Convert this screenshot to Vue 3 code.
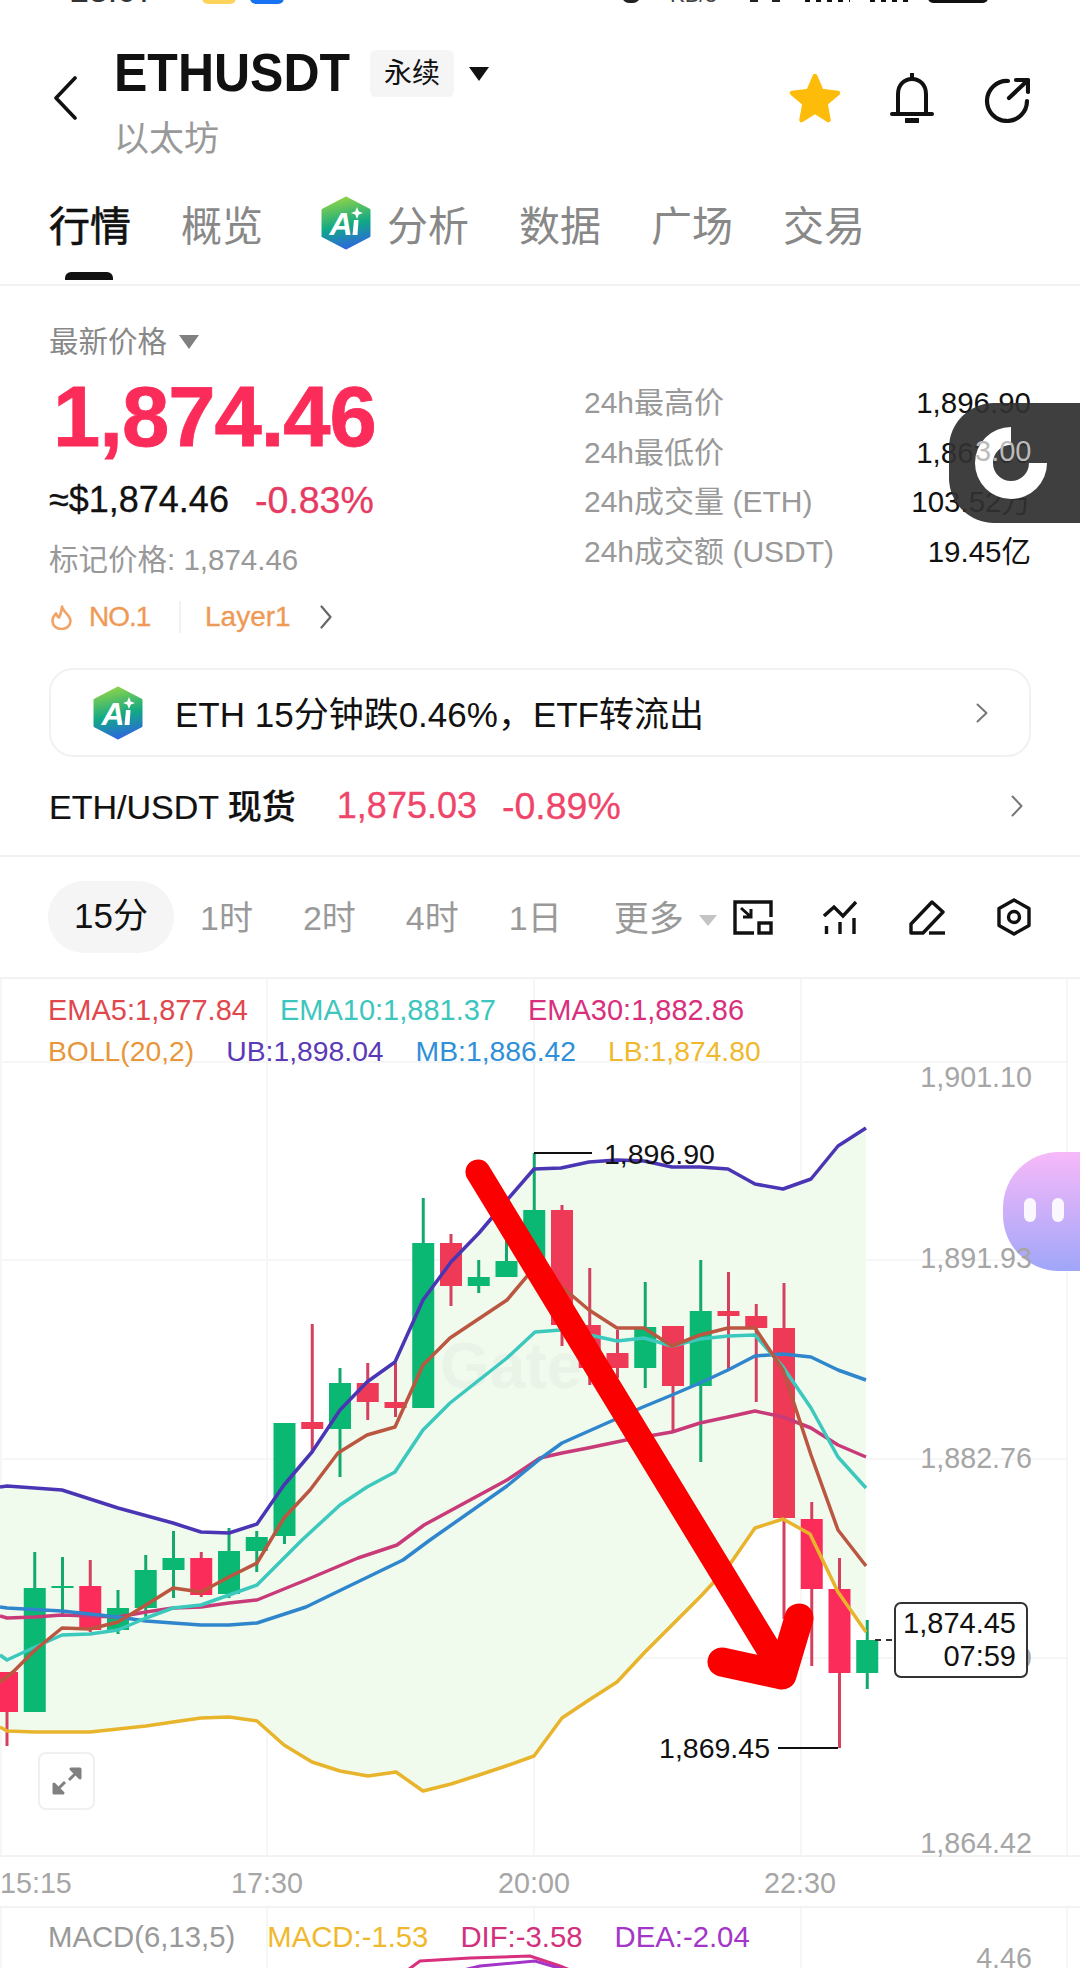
<template>
  <div class="page">
    <!-- status bar, only the bottom edge is left in the shot -->
    <div class="status">
      <span class="sb-time">23:07</span>
      <i class="sb-app yellow"></i>
      <i class="sb-app blue"></i>
      <span class="sb-right">
        <i class="sb-dot"></i>
        <span class="sb-speed">KB/s</span>
        <i class="sb-wifi"></i>
        <i class="sb-sig wide"></i>
        <i class="sb-sig"></i>
        <i class="sb-batt"></i>
      </span>
    </div>

    <header class="header">
      <svg class="back" viewBox="0 0 24 44" fill="none" stroke="#111" stroke-width="3.6" stroke-linecap="round" stroke-linejoin="round">
        <path d="M22 2 L3 22 L22 42" />
      </svg>
      <div class="title-block">
        <div class="title-row">
          <span class="title">ETHUSDT</span>
          <span class="chip">永续</span>
          <i class="tri black"></i>
        </div>
        <div class="subtitle">以太坊</div>
      </div>
      <div class="head-icons">
        <svg class="star" viewBox="0 0 52 50">
          <path d="M26 3 L32.5 18 L49 20 L36.5 30.5 L39.5 47 L26 38.5 L12.5 47 L15.5 30.5 L3 20 L19.5 18 Z" fill="#fdbb0a" stroke="#fdbb0a" stroke-width="4.5" stroke-linejoin="round" />
        </svg>
        <svg class="bell" viewBox="0 0 44 50" fill="none" stroke="#111" stroke-width="4" stroke-linecap="round">
          <path d="M22 1 V6" />
          <path d="M8 40 V21 C8 12 14 6 22 6 S36 12 36 21 V40" />
          <path d="M2 41 H42" />
          <rect x="15" y="45" width="14" height="5" fill="#111" stroke="none" />
        </svg>
        <svg class="refresh" viewBox="0 0 46 46" fill="none" stroke="#111" stroke-width="4.2" stroke-linecap="round" stroke-linejoin="round">
          <path d="M24 4 A20 20 0 1 0 43 24" />
          <path d="M32 3 H44 V15" />
          <path d="M43 4 L25 21" />
        </svg>
      </div>
    </header>

    <nav class="tabs">
      <div v-for="t in tabs" :key="t.name" class="tab" :class="{ active: t.active, ai: t.ai }">
        <svg v-if="t.ai" class="ai-logo" viewBox="0 0 50 54">
          <defs>
            <linearGradient id="aiGrad" x1="0.4" y1="0" x2="0.6" y2="1">
              <stop offset="0" stop-color="#8ad24a" />
              <stop offset="0.55" stop-color="#10a886" />
              <stop offset="1" stop-color="#2f66e0" />
            </linearGradient>
          </defs>
          <path d="M25 2 L48 14 V40 L25 52 L2 40 V14 Z" fill="url(#aiGrad)" stroke="url(#aiGrad)" stroke-width="3" stroke-linejoin="round" />
          <text x="20" y="39" class="ai-text" text-anchor="middle">A</text>
          <path d="M33 24 L37.5 24 L36.5 39 L31.5 39 Z" fill="#fff" />
          <path d="M36 11 L37.8 15.5 L42 17 L37.8 18.5 L36 23 L34.2 18.5 L30 17 L34.2 15.5 Z" fill="#fff" />
        </svg>
        {{ t.name }}
        <i v-if="t.active" class="tab-bar"></i>
      </div>
    </nav>

    <section class="info">
      <div class="info-left">
        <div class="latest">最新价格<i class="tri grey"></i></div>
        <div class="big-price">1,874.46</div>
        <div class="usd-row">
          <span class="usd">≈$1,874.46</span>
          <span class="pct">-0.83%</span>
        </div>
        <div class="mark">标记价格: 1,874.46</div>
        <div class="tags">
          <svg class="flame" viewBox="0 0 21 25" fill="none" stroke="#f2a468" stroke-width="2.6" stroke-linejoin="round">
            <path d="M11 1.5 C12 7 19.5 10 19.5 16 A9 8 0 0 1 1.5 16 C1.5 12.5 3 10.5 5 8.5 C6 11 7 12 8 12.5 C10 9 10.5 5 11 1.5 Z" />
          </svg>
          <span class="no1">NO.1</span>
          <i class="tag-div"></i>
          <span class="layer">Layer1</span>
          <svg class="tag-chev" viewBox="0 0 12 24" fill="none" stroke="#666" stroke-width="2.2" stroke-linecap="round" stroke-linejoin="round">
            <path d="M1.5 1.5 L10.5 12 L1.5 22.5" />
          </svg>
        </div>
      </div>
      <div class="stats">
        <div v-for="s in stats" :key="s.label" class="stat">
          <span class="stat-label">{{ s.label }}</span>
          <span class="stat-val">{{ s.value }}</span>
        </div>
      </div>
    </section>

    <div class="banner">
      <svg class="ai-logo" viewBox="0 0 50 54">
        <path d="M25 2 L48 14 V40 L25 52 L2 40 V14 Z" fill="url(#aiGrad)" stroke="url(#aiGrad)" stroke-width="3" stroke-linejoin="round" />
        <text x="20" y="39" class="ai-text" text-anchor="middle">A</text>
        <path d="M33 24 L37.5 24 L36.5 39 L31.5 39 Z" fill="#fff" />
        <path d="M36 11 L37.8 15.5 L42 17 L37.8 18.5 L36 23 L34.2 18.5 L30 17 L34.2 15.5 Z" fill="#fff" />
      </svg>
      <span class="banner-text">ETH 15分钟跌0.46%，ETF转流出</span>
      <svg class="chev" viewBox="0 0 12 20" fill="none" stroke="#777" stroke-width="2" stroke-linecap="round" stroke-linejoin="round">
        <path d="M1.5 1.5 L10.5 10 L1.5 18.5" />
      </svg>
    </div>

    <div class="spot">
      <span class="spot-name">ETH/USDT 现货</span>
      <span class="spot-price">1,875.03</span>
      <span class="spot-pct">-0.89%</span>
      <svg class="chev spot-chev" viewBox="0 0 12 22" fill="none" stroke="#777" stroke-width="2" stroke-linecap="round" stroke-linejoin="round">
        <path d="M1.5 1.5 L10.5 11 L1.5 20.5" />
      </svg>
    </div>

    <div class="frames">
      <span class="frame pill">15分</span>
      <span class="frame">1时</span>
      <span class="frame">2时</span>
      <span class="frame">4时</span>
      <span class="frame">1日</span>
      <span class="frame more">更多<i class="tri light"></i></span>
      <div class="tools">
        <svg class="tool" viewBox="0 0 40 35" fill="none" stroke="#111" stroke-width="3.4" stroke-linejoin="miter">
          <path d="M38 17 V2 H2 V33 H21" />
          <rect x="26" y="23" width="12" height="10" />
          <path d="M8 8 L18 17 M18 9 V17 H10" stroke-width="3" />
        </svg>
        <svg class="tool" viewBox="0 0 34 35" fill="none" stroke="#111" stroke-width="3.4" stroke-linejoin="miter">
          <path d="M1 16 L11 7 L20 16 L33 2" />
          <path d="M3.5 26 V34 M17 22 V34 M31 18 V34" />
        </svg>
        <svg class="tool" viewBox="0 0 37 35" fill="none" stroke="#111" stroke-width="3.4" stroke-linejoin="round">
          <path d="M2 24 L23 2 L34 12 L14 33 H2 Z" />
          <path d="M20 33 H36" />
        </svg>
        <svg class="tool" viewBox="0 0 34 38" fill="none" stroke="#111" stroke-width="3.4" stroke-linejoin="round">
          <path d="M17 2 L32 10.5 V27.5 L17 36 L2 27.5 V10.5 Z" />
          <circle cx="17" cy="19" r="5.5" />
        </svg>
      </div>
    </div>

    <section class="chart">
      <svg class="chart-svg" viewBox="0 977 1080 991" width="1080" height="991">
        <defs>
          <linearGradient id="bubbleGrad" x1="0" y1="0" x2="0" y2="1">
            <stop offset="0" stop-color="#f7b9f9" />
            <stop offset="1" stop-color="#a0a6f9" />
          </linearGradient>
        </defs>
        <!-- grid -->
        <line v-for="y in gridY" :key="'h' + y" x1="0" x2="1067" :y1="y" :y2="y" class="grid" />
        <line v-for="x in gridX" :key="'v' + x" :x1="x" :x2="x" y1="979" y2="1856" class="grid" />
        <line v-for="x in gridX" :key="'m' + x" :x1="x" :x2="x" y1="1908" y2="1968" class="grid" />
        <line x1="0" x2="1080" y1="1907" y2="1907" class="grid strong" />
        <line x1="0" x2="1080" y1="1856" y2="1856" class="grid strong" />

        <!-- bollinger band fill -->
        <polygon :points="bandPoints" fill="#f0fbee" />
        <text x="440" y="1388" class="watermark">Gate</text>

        <!-- candles -->
        <g v-for="(c, i) in candles" :key="i">
          <line :x1="cx(i)" :x2="cx(i)" :y1="c.hi" :y2="c.lo" :stroke="wickColor(c)" stroke-width="3" />
          <rect :x="cx(i) - 11" :y="c.top" width="22" :height="Math.max(c.bot - c.top, 2)" :fill="bodyColor(c)" />
        </g>

        <!-- indicator lines -->
        <polyline v-for="l in lines" :key="l.name" :points="toPoints(l.pts)" :stroke="l.color" :stroke-width="l.w" fill="none" stroke-linejoin="round" />

        <!-- high / low markers -->
        <path d="M534 1153 H592" stroke="#111" stroke-width="2" />
        <text x="604" y="1164" class="marker">1,896.90</text>
        <path d="M778 1748 H838" stroke="#111" stroke-width="2" />
        <text x="770" y="1758" class="marker" text-anchor="end">1,869.45</text>
        <path d="M875 1640 H893" stroke="#333" stroke-width="2" stroke-dasharray="6 5" />

        <!-- floating assistant bubble sits under the axis labels -->
        <rect x="1003" y="1152" width="150" height="119" rx="56" fill="url(#bubbleGrad)" />
        <rect x="1024" y="1198" width="12" height="24" rx="6" fill="#fff" opacity="0.9" />
        <rect x="1052" y="1198" width="12" height="24" rx="6" fill="#fff" opacity="0.9" />

        <!-- axis -->
        <text v-for="a in axis" :key="a.t" x="1032" :y="a.y + 10" class="axis" text-anchor="end">{{ a.t }}</text>
        <text v-for="t in times" :key="t.t" :x="t.x" y="1893" class="axis" :text-anchor="t.a">{{ t.t }}</text>
        <text x="1032" y="1968" class="axis" text-anchor="end">4.46</text>

        <!-- macd -->
        <polyline points="405,1972 420,1961 470,1958 530,1956 560,1966 575,1972" stroke="#d8307e" stroke-width="3" fill="none" />
        <polyline points="455,1972 480,1966 535,1961 572,1972" stroke="#a336c8" stroke-width="3" fill="none" />

        <!-- drawn arrow -->
        <path d="M478 1172 L780 1668" stroke="#fa0000" stroke-width="25" stroke-linecap="round" fill="none" />
        <path d="M722 1662 L782 1675 L799 1618" stroke="#fa0000" stroke-width="29" stroke-linecap="round" stroke-linejoin="round" fill="none" />
      </svg>

      <div class="legend">
        <div class="legend-row first">
          <span v-for="l in legend1" :key="l.t" :style="{ color: l.c }">{{ l.t }}</span>
        </div>
        <div class="legend-row">
          <span v-for="l in legend2" :key="l.t" :style="{ color: l.c }">{{ l.t }}</span>
        </div>
      </div>

      <div class="tag-box">
        <span>1,874.45</span>
        <span>07:59</span>
      </div>

      <div class="expand">
        <svg viewBox="0 0 30 28" width="30" height="28" fill="#808080" stroke="#808080" stroke-width="3">
          <path d="M19 2 H28 V11 Z" stroke-linejoin="round" />
          <path d="M23 7 L17 13" />
          <path d="M2 17 V26 H11 Z" stroke-linejoin="round" />
          <path d="M6 22 L13 15" />
        </svg>
      </div>

      <div class="macd-legend">
        <span v-for="l in legend3" :key="l.t" :style="{ color: l.c }">{{ l.t }}</span>
      </div>
    </section>

    <!-- screen recorder overlay -->
    <div class="gate-btn">
      <svg viewBox="0 0 76 76" width="76" height="76">
        <path d="M38 2 A36 36 0 1 0 74 38 H56 A18 18 0 1 1 38 20 Z" fill="#fff" />
      </svg>
      <span class="gate-ghost">3.00</span>
    </div>
  </div>
</template>

<script setup>
const tabs = [
  { name: '行情', active: true },
  { name: '概览' },
  { name: '分析', ai: true },
  { name: '数据' },
  { name: '广场' },
  { name: '交易' }
]

const stats = [
  { label: '24h最高价', value: '1,896.90' },
  { label: '24h最低价', value: '1,863.00' },
  { label: '24h成交量 (ETH)', value: '103.52万' },
  { label: '24h成交额 (USDT)', value: '19.45亿' }
]

const legend1 = [
  { t: 'EMA5:1,877.84', c: '#e0484e' },
  { t: 'EMA10:1,881.37', c: '#3cc6bd' },
  { t: 'EMA30:1,882.86', c: '#d9307e' }
]
const legend2 = [
  { t: 'BOLL(20,2)', c: '#e8963a' },
  { t: 'UB:1,898.04', c: '#5a3ab6' },
  { t: 'MB:1,886.42', c: '#2f8fd8' },
  { t: 'LB:1,874.80', c: '#f0b92d' }
]
const legend3 = [
  { t: 'MACD(6,13,5)', c: '#999' },
  { t: 'MACD:-1.53', c: '#f0b92d' },
  { t: 'DIF:-3.58', c: '#d2307e' },
  { t: 'DEA:-2.04', c: '#a336c8' }
]

const gridY = [1062, 1260, 1459, 1658]
const gridX = [1, 267, 534, 801, 1067]

const axis = [
  { t: '1,901.10', y: 1077 },
  { t: '1,891.93', y: 1258 },
  { t: '1,882.76', y: 1458 },
  { t: '1,873.59', y: 1658 },
  { t: '1,864.42', y: 1843 }
]

const times = [
  { t: '15:15', x: 0, a: 'start' },
  { t: '17:30', x: 267, a: 'middle' },
  { t: '20:00', x: 534, a: 'middle' },
  { t: '22:30', x: 800, a: 'middle' }
]

// g = green candle, r = red candle
const candles = [
  { k: 'r', hi: 1672, top: 1672, bot: 1712, lo: 1746 },
  { k: 'g', hi: 1552, top: 1588, bot: 1712, lo: 1712 },
  { k: 'g', hi: 1557, top: 1586, bot: 1588, lo: 1617 },
  { k: 'r', hi: 1560, top: 1586, bot: 1630, lo: 1632 },
  { k: 'g', hi: 1590, top: 1608, bot: 1630, lo: 1634 },
  { k: 'g', hi: 1555, top: 1570, bot: 1608, lo: 1617 },
  { k: 'g', hi: 1531, top: 1558, bot: 1570, lo: 1598 },
  { k: 'r', hi: 1552, top: 1558, bot: 1595, lo: 1597 },
  { k: 'g', hi: 1528, top: 1551, bot: 1594, lo: 1598 },
  { k: 'g', hi: 1531, top: 1537, bot: 1551, lo: 1572 },
  { k: 'g', hi: 1423, top: 1423, bot: 1536, lo: 1544 },
  { k: 'r', hi: 1324, top: 1422, bot: 1429, lo: 1453 },
  { k: 'g', hi: 1368, top: 1383, bot: 1429, lo: 1477 },
  { k: 'r', hi: 1363, top: 1383, bot: 1402, lo: 1420 },
  { k: 'r', hi: 1363, top: 1402, bot: 1408, lo: 1417 },
  { k: 'g', hi: 1198, top: 1243, bot: 1408, lo: 1408 },
  { k: 'r', hi: 1234, top: 1243, bot: 1286, lo: 1306 },
  { k: 'g', hi: 1260, top: 1277, bot: 1286, lo: 1293 },
  { k: 'g', hi: 1237, top: 1261, bot: 1277, lo: 1277 },
  { k: 'g', hi: 1153, top: 1210, bot: 1262, lo: 1262 },
  { k: 'r', hi: 1205, top: 1210, bot: 1325, lo: 1346 },
  { k: 'r', hi: 1268, top: 1325, bot: 1368, lo: 1385 },
  { k: 'r', hi: 1330, top: 1353, bot: 1368, lo: 1378 },
  { k: 'g', hi: 1282, top: 1327, bot: 1368, lo: 1388 },
  { k: 'r', hi: 1326, top: 1326, bot: 1386, lo: 1432 },
  { k: 'g', hi: 1260, top: 1311, bot: 1386, lo: 1462 },
  { k: 'r', hi: 1272, top: 1311, bot: 1316, lo: 1370 },
  { k: 'r', hi: 1304, top: 1316, bot: 1328, lo: 1402 },
  { k: 'r', hi: 1283, top: 1328, bot: 1518, lo: 1619 },
  { k: 'r', hi: 1502, top: 1519, bot: 1589, lo: 1666 },
  { k: 'r', hi: 1558, top: 1589, bot: 1673, lo: 1748 },
  { k: 'g', hi: 1620, top: 1640, bot: 1673, lo: 1689 }
]

const cx = (i) => 7 + 27.75 * i
const bodyColor = (c) => {
  if (c.k === 'g') return '#0bb873'
  return c.top > 1500 ? '#fb2c5a' : '#ee3a56'
}
const wickColor = (c) => (c.k === 'g' ? '#12a86e' : '#d6405f')

const ub = [[0, 1487], [7, 1486], [62, 1490], [118, 1508], [173, 1523], [201, 1532], [229, 1533], [257, 1524], [284, 1485], [312, 1452], [340, 1410], [367, 1382], [395, 1362], [423, 1300], [451, 1262], [479, 1233], [507, 1200], [534, 1169], [561, 1168], [589, 1162], [617, 1160], [644, 1161], [672, 1167], [700, 1167], [728, 1169], [755, 1184], [783, 1189], [811, 1179], [838, 1146], [866, 1128]]
const lb = [[0, 1727], [7, 1731], [35, 1732], [90, 1732], [146, 1726], [173, 1722], [201, 1718], [229, 1717], [257, 1721], [284, 1745], [312, 1762], [340, 1771], [368, 1776], [396, 1772], [423, 1791], [451, 1784], [479, 1775], [506, 1766], [534, 1756], [562, 1718], [589, 1700], [617, 1682], [645, 1652], [672, 1625], [700, 1597], [728, 1567], [755, 1528], [783, 1519], [810, 1534], [838, 1592], [866, 1632]]
const mb = [[0, 1607], [7, 1608], [62, 1611], [90, 1614], [118, 1617], [146, 1621], [173, 1623], [201, 1625], [229, 1625], [257, 1623], [306, 1607], [341, 1590], [403, 1560], [430, 1540], [507, 1486], [540, 1459], [562, 1443], [643, 1407], [672, 1395], [700, 1383], [728, 1370], [755, 1356], [783, 1354], [811, 1357], [838, 1370], [866, 1380]]
const ema30 = [[0, 1616], [7, 1618], [35, 1617], [62, 1615], [90, 1616], [118, 1617], [146, 1612], [173, 1608], [201, 1607], [229, 1603], [257, 1600], [306, 1580], [358, 1558], [397, 1545], [424, 1525], [507, 1480], [540, 1458], [562, 1453], [588, 1448], [626, 1440], [672, 1432], [700, 1423], [728, 1417], [755, 1411], [783, 1417], [811, 1428], [838, 1445], [866, 1457]]
const ema10 = [[0, 1655], [7, 1660], [35, 1647], [62, 1635], [90, 1634], [118, 1630], [146, 1618], [173, 1608], [201, 1605], [229, 1595], [257, 1585], [284, 1558], [302, 1540], [340, 1505], [367, 1487], [395, 1472], [423, 1430], [450, 1403], [507, 1358], [535, 1332], [561, 1330], [590, 1335], [617, 1341], [644, 1338], [672, 1346], [700, 1339], [728, 1336], [755, 1335], [783, 1367], [811, 1408], [838, 1457], [866, 1488]]
const ema5 = [[0, 1682], [13, 1672], [35, 1650], [62, 1628], [90, 1629], [118, 1622], [146, 1605], [173, 1588], [201, 1592], [229, 1577], [257, 1563], [284, 1518], [310, 1490], [338, 1453], [367, 1435], [395, 1427], [423, 1365], [450, 1338], [507, 1300], [534, 1268], [562, 1287], [589, 1310], [617, 1328], [644, 1328], [672, 1346], [700, 1335], [728, 1328], [755, 1328], [783, 1370], [811, 1455], [838, 1530], [866, 1566]]

const toPoints = (pts) => pts.map((p) => p.join(',')).join(' ')
const bandPoints = toPoints([...ub, ...[...lb].reverse()])

const lines = [
  { name: 'lb', pts: lb, color: '#e8b42c', w: 3.5 },
  { name: 'ema30', pts: ema30, color: '#c93a78', w: 3.5 },
  { name: 'mb', pts: mb, color: '#2f86cc', w: 3.5 },
  { name: 'ema10', pts: ema10, color: '#3cc8bd', w: 3.5 },
  { name: 'ema5', pts: ema5, color: '#bb5640', w: 3.5 },
  { name: 'ub', pts: ub, color: '#4a35b5', w: 3.5 }
]
</script>

<style>
html,
body {
  background: #fff;
}
</style>

<style scoped>
.page {
  position: relative;
  width: 1080px;
  height: 1968px;
  overflow: hidden;
  background: #fff;
  color: #111;
  font-family: "Liberation Sans", "Noto Sans CJK SC", sans-serif;
}

.status {
  display: flex;
  height: 4px;
  overflow: hidden;
  padding-left: 70px;
}
.sb-time {
  width: 132px;
  font-size: 34px;
  line-height: 34px;
  margin-top: -27px;
  color: #333;
}
.sb-app {
  width: 34px;
  height: 14px;
  margin-top: -10px;
  border-radius: 6px;
}
.sb-app.yellow {
  background: #fdd35c;
}
.sb-app.blue {
  background: #1773f2;
  margin-left: 14px;
}
.sb-right {
  display: flex;
  margin-left: auto;
  padding-right: 92px;
}
.sb-dot {
  width: 18px;
  height: 14px;
  margin-top: -11px;
  border-radius: 7px;
  background: #222;
}
.sb-speed {
  font-size: 22px;
  line-height: 22px;
  margin: -16px 0 0 30px;
  width: 45px;
  color: #444;
}
.sb-wifi {
  width: 35px;
  height: 2px;
  margin-left: 35px;
  background: repeating-linear-gradient(90deg, #222 0 8px, transparent 8px 22px);
}
.sb-sig {
  width: 40px;
  height: 2px;
  margin-left: 20px;
  background: repeating-linear-gradient(90deg, #111 0 5px, transparent 5px 11px);
}
.sb-sig.wide {
  width: 45px;
}
.sb-batt {
  width: 60px;
  height: 10px;
  margin: -7px 0 0 18px;
  border-radius: 6px;
  background: #111;
}

.header {
  display: flex;
  align-items: flex-start;
  height: 193px;
  box-sizing: border-box;
  padding: 46px 50px 0 53px;
}
.back {
  width: 24px;
  height: 44px;
  margin: 26px 37px 0 0;
}
.title-row {
  display: flex;
  align-items: center;
  height: 47px;
}
.title {
  font-size: 50px;
  font-weight: 700;
  line-height: 47px;
  margin-right: 20px;
  transform: scaleY(1.08);
}
.chip {
  width: 84px;
  height: 47px;
  border-radius: 6px;
  background: #f5f5f5;
  font-size: 28px;
  line-height: 47px;
  text-align: center;
  margin-right: 15px;
}
.tri {
  display: inline-block;
  width: 0;
  height: 0;
  border-left: 10px solid transparent;
  border-right: 10px solid transparent;
  border-top: 14px solid #111;
}
.tri.grey {
  border-top-color: #808080;
  margin-left: 12px;
  vertical-align: 3px;
}
.tri.light {
  border-left-width: 9px;
  border-right-width: 9px;
  border-top: 11px solid #c4c4c4;
  margin-left: 15px;
  vertical-align: 5px;
}
.subtitle {
  margin-top: 24px;
  font-size: 35px;
  line-height: 36px;
  color: #999;
}
.head-icons {
  display: flex;
  align-items: flex-start;
  margin: 23px 0 0 auto;
}
.star {
  width: 52px;
  height: 50px;
}
.bell {
  width: 44px;
  height: 50px;
  margin-left: 49px;
}
.refresh {
  width: 46px;
  height: 46px;
  margin: 4px 0 0 50px;
}

.tabs {
  display: flex;
  align-items: flex-start;
  gap: 50px;
  height: 89px;
  box-sizing: border-box;
  padding-left: 49px;
  border-bottom: 2px solid #f2f2f2;
}
.tab {
  position: relative;
  display: flex;
  align-items: center;
  height: 52px;
  font-size: 41px;
  color: #888;
}
.tab.active {
  color: #111;
  -webkit-text-stroke: 0.6px #111;
}
.tab.ai {
  margin-left: 8px;
}
.tab .ai-logo {
  margin-right: 16px;
}
.ai-logo {
  width: 50px;
  height: 54px;
  flex: none;
}
.ai-text {
  font-family: "Liberation Sans", sans-serif;
  font-size: 32px;
  font-weight: 700;
  font-style: italic;
  fill: #fff;
}
.tab-bar {
  position: absolute;
  left: 16px;
  bottom: -31px;
  width: 48px;
  height: 8px;
  border-radius: 6px 6px 0 0;
  background: #111;
}

.info {
  display: flex;
  height: 382px;
  box-sizing: border-box;
  padding-left: 49px;
}
.info-left {
  width: 535px;
  flex: none;
}
.latest {
  margin-top: 41px;
  font-size: 29.5px;
  line-height: 30px;
  color: #888;
}
.big-price {
  margin: 17px 0 0 4px;
  font-size: 85px;
  font-weight: 700;
  line-height: 86px;
  letter-spacing: -1px;
  color: #fb2c5a;
  -webkit-text-stroke: 0.8px #fb2c5a;
}
.usd-row {
  display: flex;
  gap: 26px;
  margin-top: 23px;
  font-size: 36px;
  line-height: 34px;
  -webkit-text-stroke: 0.3px #111;
}
.pct {
  font-size: 37.5px;
  color: #e63a62;
  -webkit-text-stroke: 0.3px #e63a62;
}
.mark {
  margin-top: 28px;
  font-size: 29.5px;
  line-height: 30px;
  color: #999;
}
.tags {
  display: flex;
  align-items: center;
  height: 32px;
  margin-top: 26px;
  font-size: 28px;
  color: #ee9a55;
  -webkit-text-stroke: 0.3px #ee9a55;
}
.flame {
  width: 21px;
  height: 25px;
  margin: 0 17px 0 2px;
}
.no1 {
  width: 60px;
  letter-spacing: -1px;
}
.tag-div {
  width: 2px;
  height: 32px;
  margin: 0 24px 0 30px;
  background: #f2f2f2;
}
.layer {
  width: 90px;
}
.tag-chev {
  width: 12px;
  height: 24px;
  margin-left: 25px;
}
.stats {
  flex: 1;
  margin-top: 92px;
  padding-right: 49px;
}
.stat {
  display: flex;
  justify-content: space-between;
  height: 49.6px;
  line-height: 49.6px;
  font-size: 30px;
}
.stat-label {
  color: #999;
}
.stat-val {
  font-size: 29.5px;
}

.banner {
  display: flex;
  align-items: center;
  height: 89px;
  box-sizing: border-box;
  margin: 0 49px;
  padding: 0 41px 0 42px;
  border: 2px solid #f1f1f1;
  border-radius: 24px;
}
.banner-text {
  margin: -2px 0 0 32px;
  font-size: 35px;
}
.chev {
  width: 12px;
  height: 20px;
  margin-left: auto;
}

.spot {
  display: flex;
  align-items: center;
  height: 100px;
  box-sizing: border-box;
  padding: 0 57px 0 49px;
  border-bottom: 2px solid #f2f2f2;
  font-size: 34px;
}
.spot-name {
  margin-top: -3px;
  font-weight: 500;
  -webkit-text-stroke: 0.2px #111;
}
.spot-price {
  margin-left: 41px;
  font-size: 36px;
  color: #f0456a;
  -webkit-text-stroke: 0.3px #f0456a;
}
.spot-pct {
  margin-left: 25px;
  font-size: 37.5px;
  color: #f0456a;
  -webkit-text-stroke: 0.3px #f0456a;
}
.spot-chev {
  height: 22px;
}

.frames {
  display: flex;
  align-items: center;
  height: 122px;
  box-sizing: border-box;
  padding: 0 49px 0 48px;
  border-bottom: 2px solid #f2f2f2;
}
.frame {
  margin: -4px 50px 0 0;
  font-size: 34px;
  color: #999;
  white-space: nowrap;
}
.frame.pill {
  width: 126px;
  height: 72px;
  margin: 0 26px 0 0;
  border-radius: 36px;
  background: #f5f5f5;
  color: #111;
  font-size: 35px;
  line-height: 70px;
  text-align: center;
}
.frame.more {
  margin: -4px 0 0 2px;
  font-size: 35px;
}
.tools {
  display: flex;
  align-items: center;
  margin-left: auto;
}
.tool {
  height: 35px;
  margin-left: 50px;
}
.tool:nth-child(1) {
  width: 40px;
  margin-left: 0;
}
.tool:nth-child(2) {
  width: 34px;
}
.tool:nth-child(3) {
  width: 37px;
  margin-left: 52px;
}
.tool:nth-child(4) {
  width: 34px;
  height: 38px;
  margin-left: 51px;
}

.chart {
  position: relative;
  height: 989px;
}
.chart-svg {
  display: block;
  margin-top: -2px;
}
.grid {
  stroke: #f6f6f6;
  stroke-width: 2;
}
.grid.strong {
  stroke: #f3f3f3;
}
.watermark {
  font-family: "Liberation Sans", sans-serif;
  font-size: 64px;
  font-weight: 700;
  fill: #e9f3e7;
}
.marker {
  font-size: 28.5px;
  fill: #111;
}
.axis {
  font-size: 28.7px;
  fill: #a6a6a6;
}
.legend {
  position: absolute;
  left: 48px;
  top: 17px;
  display: flex;
  flex-direction: column;
  gap: 9px;
}
.legend-row {
  display: flex;
  gap: 32px;
  font-size: 28.3px;
  line-height: 32px;
  white-space: nowrap;
}
.legend-row.first {
  font-size: 29px;
}
.tag-box {
  position: absolute;
  left: 894px;
  top: 625px;
  display: flex;
  flex-direction: column;
  align-items: flex-end;
  justify-content: center;
  width: 134px;
  height: 76px;
  box-sizing: border-box;
  padding-right: 10px;
  border: 2px solid #333;
  border-radius: 7px;
  background: #fff;
  font-size: 29px;
  line-height: 33px;
}
.expand {
  position: absolute;
  left: 38px;
  top: 775px;
  display: flex;
  align-items: center;
  justify-content: center;
  width: 57px;
  height: 58px;
  box-sizing: border-box;
  border: 2px solid #f0f0f0;
  border-radius: 8px;
  background: #fff;
}
.macd-legend {
  position: absolute;
  left: 48px;
  top: 944px;
  display: flex;
  gap: 32px;
  font-size: 29.3px;
  line-height: 32px;
  white-space: nowrap;
}

.gate-btn {
  position: absolute;
  left: 949px;
  top: 403px;
  display: flex;
  align-items: center;
  width: 131px;
  height: 120px;
  padding-left: 24px;
  box-sizing: border-box;
  border-radius: 45px 0 0 45px;
  background: rgba(48, 48, 48, 0.93);
}
.gate-ghost {
  position: absolute;
  left: 26px;
  top: 33px;
  font-size: 29px;
  line-height: 30px;
  color: #bbb;
}
.gate-btn svg {
  flex: none;
}
</style>
